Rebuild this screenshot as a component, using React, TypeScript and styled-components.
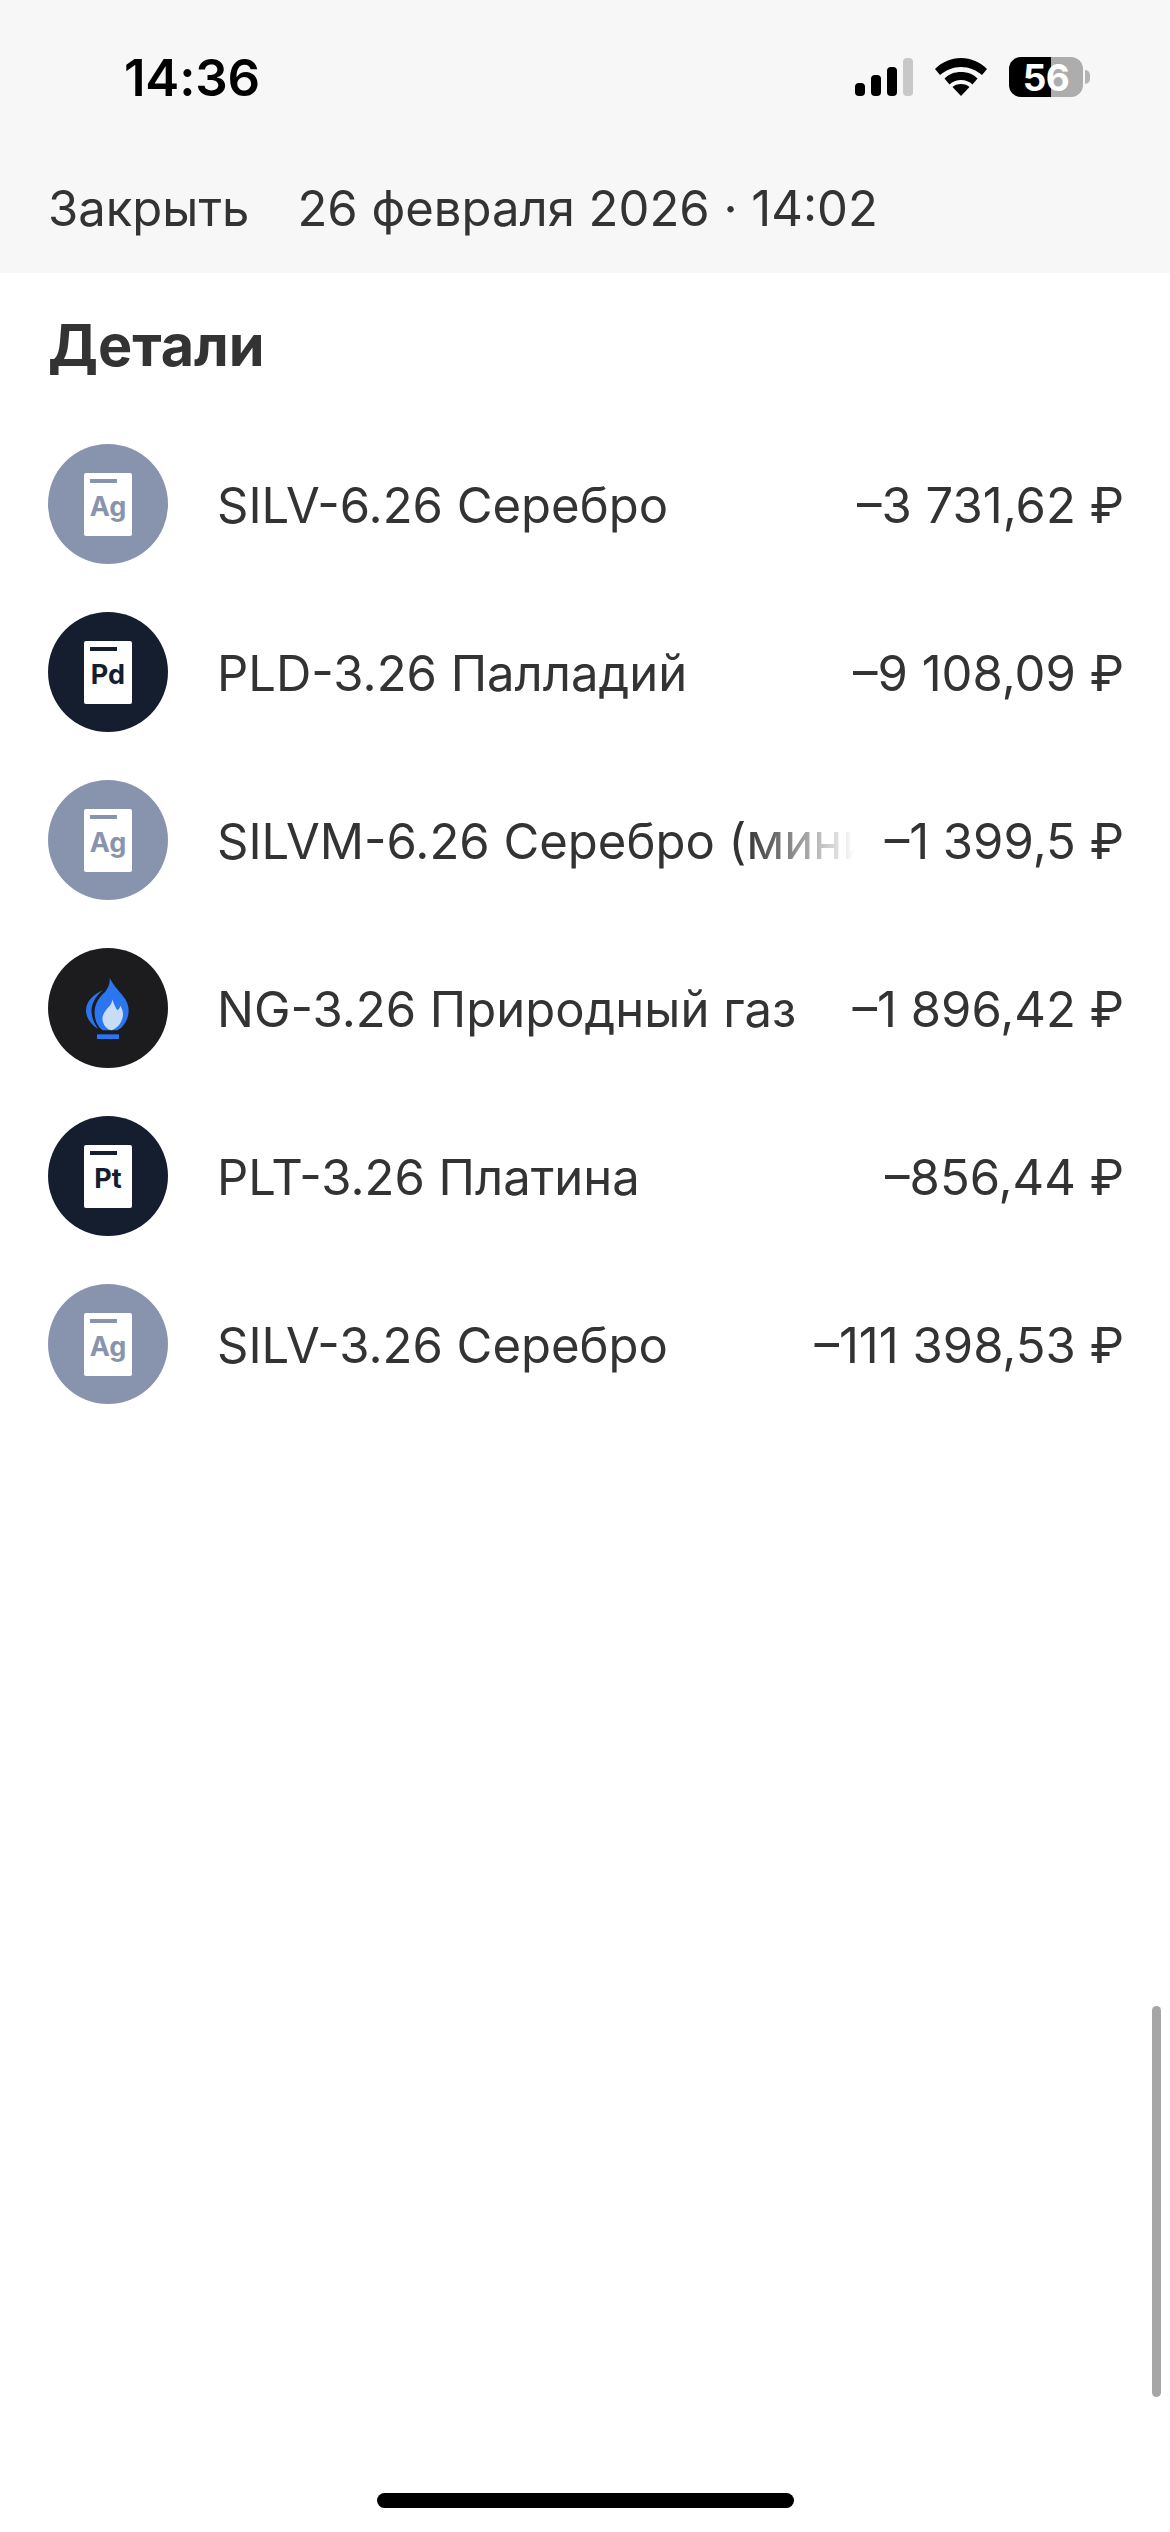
import React from "react";
import styled, { createGlobalStyle } from "styled-components";

const GlobalStyle = createGlobalStyle`
  html,
  body {
    margin: 0;
    padding: 0;
    background: #ffffff;
  }

  body {
    font-family: Inter, "Liberation Sans", sans-serif;
    color: #333333;
  }
`;

const Page = styled.div`
  position: relative;
  overflow: hidden;
  width: 1170px;
  height: 2532px;
  background: #ffffff;
`;

const Header = styled.header`
  height: 273px;
  background: #f7f7f7;
`;

const StatusBar = styled.div`
  display: flex;
  align-items: center;
  justify-content: space-between;
  height: 78px;
  padding: 38px 87px 0 124px;
`;

const Time = styled.span`
  font-size: 51px;
  font-weight: 600;
  letter-spacing: -0.2px;
  color: #000000;
`;

const StatusIcons = styled.div`
  display: flex;
  align-items: center;
  gap: 22px;
`;

const Battery = styled.div`
  position: relative;
  display: flex;
  align-items: center;
  justify-content: center;
  width: 74px;
  height: 40px;
  border-radius: 12px;
  background: linear-gradient(90deg, #000000 42px, #adadad 42px);
  color: #ffffff;
  font-size: 37px;
  font-weight: 700;
  letter-spacing: -0.5px;

  &::after {
    content: "";
    position: absolute;
    top: 13px;
    right: -7px;
    width: 5px;
    height: 14px;
    border-radius: 0 7px 7px 0;
    background: #b5b5b5;
  }
`;

const NavBar = styled.nav`
  display: flex;
  align-items: center;
  gap: 48px;
  height: 100px;
  padding: 42px 48px 0;
  font-size: 49px;
  color: #333333;
`;

const Content = styled.main`
  padding: 0 46px 0 48px;
`;

const Title = styled.h1`
  margin: 0;
  padding: 37px 0 0;
  height: 171px;
  box-sizing: border-box;
  font-size: 57.5px;
  line-height: 70px;
  font-weight: 700;
  color: #333333;
`;

const List = styled.div`
  display: flex;
  flex-direction: column;
  gap: 48px;
`;

const Row = styled.div`
  display: flex;
  align-items: center;
  height: 120px;
`;

const Badge = styled.div<{ $color: string }>`
  display: flex;
  flex: none;
  align-items: center;
  justify-content: center;
  width: 120px;
  height: 120px;
  border-radius: 50%;
  background: ${(p) => p.$color};
`;

const Ticker = styled.div<{ $color: string }>`
  display: flex;
  box-sizing: border-box;
  flex-direction: column;
  align-items: center;
  width: 48px;
  height: 63px;
  padding-top: 6px;
  border-radius: 2px;
  background: #ffffff;
  color: ${(p) => p.$color};
  font-size: 27px;
  line-height: 30px;
  font-weight: 700;

  &::before {
    content: "";
    display: block;
    align-self: flex-start;
    width: 27px;
    height: 4px;
    margin: 0 0 9px 6px;
    background: ${(p) => p.$color};
  }
`;

const Name = styled.div<{ $fade?: boolean }>`
  flex: 1;
  overflow: hidden;
  min-width: 0;
  margin-left: 49px;
  padding-top: 3px;
  font-size: 49px;
  line-height: 64px;
  white-space: nowrap;
  ${(p) => p.$fade && "mask-image: linear-gradient(90deg, #000 calc(100% - 110px), transparent 100%);"}
`;

const Amount = styled.div`
  flex: none;
  margin-left: 30px;
  padding-top: 3px;
  font-size: 49px;
  line-height: 64px;
  white-space: nowrap;
`;

const ScrollThumb = styled.div`
  position: absolute;
  top: 2006px;
  left: 1152px;
  width: 9px;
  height: 391px;
  border-radius: 5px;
  background: #a6a6a6;
`;

const HomeIndicator = styled.div`
  position: absolute;
  left: 377px;
  bottom: 24px;
  width: 417px;
  height: 15px;
  border-radius: 8px;
  background: #000000;
`;

const SignalIcon = () => (
  <svg width="58" height="38" viewBox="0 0 58 38">
    <rect x="0" y="25" width="10" height="13" rx="4" fill="#000" />
    <rect x="16" y="17" width="10" height="21" rx="4" fill="#000" />
    <rect x="32" y="9" width="10" height="29" rx="4" fill="#000" />
    <rect x="48" y="0" width="10" height="38" rx="4" fill="#c8c8c8" />
  </svg>
);

const WifiIcon = () => (
  <svg width="52" height="38" viewBox="0 0 52 38">
    <path d="M26 0C16 0 7 4 0 11l5 6c6-5 13-8 21-8s15 3 21 8l5-6C45 4 36 0 26 0z" fill="#000" />
    <path d="M26 14c-6.500 0-12 2-16.500 6.500l5 6c3-3 7-4.500 11.500-4.500s8.500 1.500 11.500 4.500l5-6C38 16 32.500 14 26 14z" fill="#000" />
    <path d="M26 26c-3.500 0-6.500 1-8.500 3L26 38l8.500-9c-2-2-5-3-8.500-3z" fill="#000" />
  </svg>
);

const FlameIcon = () => (
  <svg width="60" height="75" viewBox="0 0 180 225">
    <path
      d="M95 20C108 48 128 62 142 85C158 110 155 145 130 170L118 178H75C58 168 48 145 50 118C52 95 66 75 82 62C90 50 97 38 95 20Z"
      fill="#2a76f0"
    />
    <path
      d="M74 58C45 70 24 93 24 118C24 140 38 160 60 174C48 155 38 135 41 112C44 92 56 73 74 58Z"
      fill="#2a76f0"
    />
    <path
      d="M103 85C108 100 112 110 118 118C122 115 126 110 127 104C136 118 138 135 130 150C124 165 112 174 100 178C88 175 78 165 74 150C70 132 85 115 95 105C100 98 103 92 103 85Z"
      fill="#c9dcf6"
    />
    <rect x="57" y="190" width="66" height="14" fill="#2a76f0" />
  </svg>
);

const SILVER = "#8894ae";
const NAVY = "#141e2e";

const items = [
  { name: "SILV-6.26 Серебро", amount: "–3 731,62 ₽", metal: "Ag", color: SILVER },
  { name: "PLD-3.26 Палладий", amount: "–9 108,09 ₽", metal: "Pd", color: NAVY },
  { name: "SILVM-6.26 Серебро (мини)", amount: "–1 399,5 ₽", metal: "Ag", color: SILVER, fade: true },
  { name: "NG-3.26 Природный газ", amount: "–1 896,42 ₽", metal: null, color: "#1c1c1e" },
  { name: "PLT-3.26 Платина", amount: "–856,44 ₽", metal: "Pt", color: NAVY },
  { name: "SILV-3.26 Серебро", amount: "–111 398,53 ₽", metal: "Ag", color: SILVER },
];

export default function App() {
  return (
    <Page>
      <GlobalStyle />
      <Header>
        <StatusBar>
          <Time>14:36</Time>
          <StatusIcons>
            <SignalIcon />
            <WifiIcon />
            <Battery>56</Battery>
          </StatusIcons>
        </StatusBar>
        <NavBar>
          <span>Закрыть</span>
          <span>26 февраля 2026 · 14:02</span>
        </NavBar>
      </Header>
      <Content>
        <Title>Детали</Title>
        <List>
          {items.map((item) => (
            <Row key={item.name}>
              <Badge $color={item.color}>
                {item.metal ? <Ticker $color={item.color}>{item.metal}</Ticker> : <FlameIcon />}
              </Badge>
              <Name $fade={item.fade}>{item.name}</Name>
              <Amount>{item.amount}</Amount>
            </Row>
          ))}
        </List>
      </Content>
      <ScrollThumb />
      <HomeIndicator />
    </Page>
  );
}
